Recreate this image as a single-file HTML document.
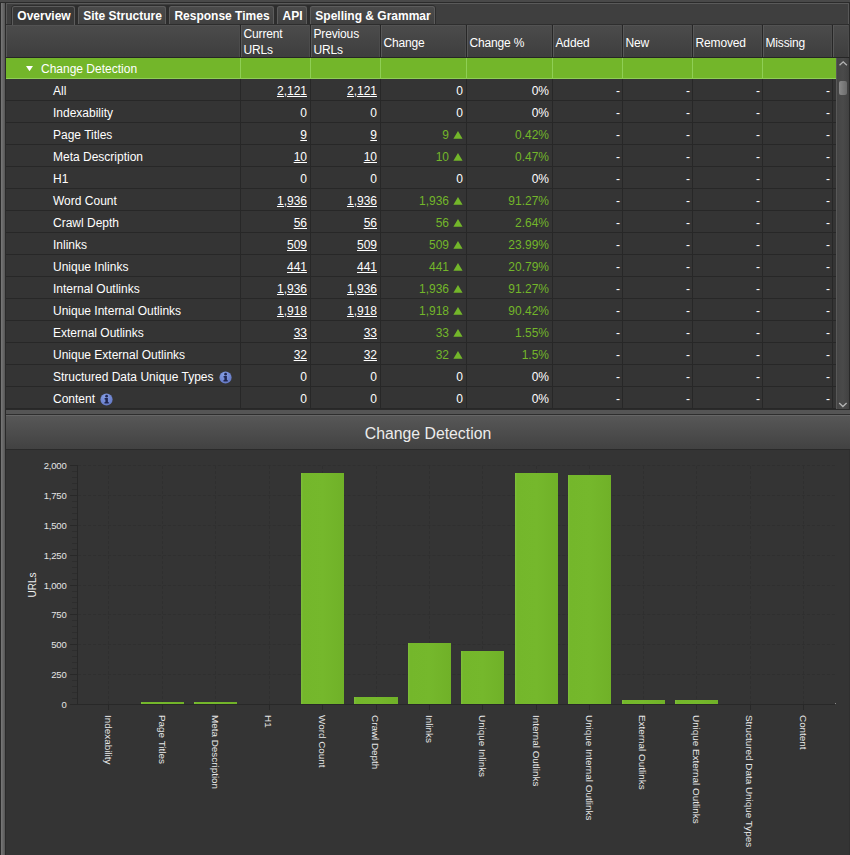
<!DOCTYPE html><html><head><meta charset="utf-8"><title>Change Detection</title><style>
html,body{margin:0;padding:0}
body{width:850px;height:855px;overflow:hidden;background:#343434;position:relative;font-family:"Liberation Sans",Arial,sans-serif;font-size:12px;color:#fff}
div,span{position:absolute;box-sizing:border-box;white-space:nowrap}
.tab{top:6px;height:18px;border:1px solid #5c5c5c;border-bottom:none;border-radius:2.5px 2.5px 0 0;background:linear-gradient(#4b4b4b,#404040);font-weight:bold;font-size:12px;line-height:18px;text-align:center;color:#fff;padding-left:1px}
.tab.sel{background:#383838;border-color:#5c5c5c;height:19px}
.hc{top:25px;height:32px;background:linear-gradient(#5a5a5a 0,#4b4b4b 1px,#3e3e3e);border-left:1px solid #585858;border-right:1px solid #4c4c4c;font-size:12px;letter-spacing:-0.15px;line-height:16.2px;padding-left:1.5px;padding-top:1px;color:#fff}
.vl{width:1px;background:#272727}
.hl{height:1px;background:#272727;left:6px;width:830px}
.lab{left:53px;height:21px;line-height:25px}
.num{height:21px;line-height:25px;text-align:right}
.num u{text-decoration:underline;text-underline-offset:1px}
.g{color:#73b62a}
.tri{width:9.2px;height:7.8px;background:#73b62a;clip-path:polygon(50% 0,100% 100%,0 100%)}
.info{width:12px;height:12px;border-radius:6px;background:#6f80c4}
.yl{font-size:9.5px;letter-spacing:-0.2px;text-align:right;width:60px;left:6.5px;height:14px;line-height:14px;color:#e4e4e4}
.xl{font-size:9.9px;transform-origin:0 0;transform:rotate(90deg);height:14px;line-height:14px;color:#e8e8e8}
.bar{background:linear-gradient(90deg,#7fbf3c 0,#74b72b 5%,#75b82c 50%,#70b128 100%)}
</style></head><body>
<div style="left:0;top:0;width:850px;height:2px;background:#494949"></div>
<div style="left:0;top:2px;width:850px;height:1px;background:#2b2b2b"></div>
<div style="left:0;top:3px;width:850px;height:22px;background:#3f3f3f"></div>
<div style="left:0;top:3px;width:6px;height:852px;background:linear-gradient(90deg,#2a2a2a 0,#2a2a2a 1px,#787878 1px,#565656 5px,#2a2a2a 5px)"></div>
<div style="left:6px;top:3px;width:843px;height:1px;background:#5a5a5a"></div>
<div style="left:6px;top:3px;width:1px;height:21px;background:#585858"></div>
<div style="left:848px;top:3px;width:1px;height:21px;background:#585858"></div>
<div style="left:849px;top:3px;width:1px;height:447px;background:#2a2a2a"></div>
<div style="left:849px;top:450px;width:1px;height:405px;background:#2f2f2f"></div>
<div style="left:6px;top:24px;width:844px;height:1px;background:#2e2e2e"></div>
<div style="left:11px;top:5px;width:425px;height:20px;background:#2d2d2d;border-radius:4px 4px 0 0"></div>
<div class="tab sel" style="left:12px;width:63px">Overview</div>
<div class="tab" style="left:78px;width:88px">Site Structure</div>
<div class="tab" style="left:169px;width:105px">Response Times</div>
<div class="tab" style="left:277px;width:30px">API</div>
<div class="tab" style="left:310px;width:125px">Spelling &amp; Grammar</div>
<div class="hc" style="left:6px;width:234px"></div>
<div class="hc" style="left:241px;width:69px;">Current<br>URLs</div>
<div class="hc" style="left:311px;width:69px;">Previous<br>URLs</div>
<div class="hc" style="left:381px;width:85px;line-height:34px;">Change</div>
<div class="hc" style="left:467px;width:85px;line-height:34px;">Change %</div>
<div class="hc" style="left:553px;width:69px;line-height:34px;">Added</div>
<div class="hc" style="left:623px;width:69px;line-height:34px;">New</div>
<div class="hc" style="left:693px;width:69px;line-height:34px;">Removed</div>
<div class="hc" style="left:763px;width:69px;line-height:34px;">Missing</div>
<div class="hc" style="left:833px;width:16px"></div>
<div class="vl" style="left:240px;top:25px;height:33px"></div>
<div class="vl" style="left:310px;top:25px;height:33px"></div>
<div class="vl" style="left:380px;top:25px;height:33px"></div>
<div class="vl" style="left:466px;top:25px;height:33px"></div>
<div class="vl" style="left:552px;top:25px;height:33px"></div>
<div class="vl" style="left:622px;top:25px;height:33px"></div>
<div class="vl" style="left:692px;top:25px;height:33px"></div>
<div class="vl" style="left:762px;top:25px;height:33px"></div>
<div class="vl" style="left:832px;top:25px;height:33px"></div>
<div style="left:849px;top:25px;width:1px;height:384px;background:#2a2a2a"></div>
<div style="left:6px;top:57px;width:844px;height:1px;background:#262626"></div>
<div style="left:6px;top:58px;width:830px;height:21px;background:#73b62a;border-bottom:1px solid #8fcf55"></div>
<div style="left:240px;top:58px;width:1px;height:21px;background:#8fcf55"></div>
<div style="left:310px;top:58px;width:1px;height:21px;background:#8fcf55"></div>
<div style="left:380px;top:58px;width:1px;height:21px;background:#8fcf55"></div>
<div style="left:466px;top:58px;width:1px;height:21px;background:#8fcf55"></div>
<div style="left:552px;top:58px;width:1px;height:21px;background:#8fcf55"></div>
<div style="left:622px;top:58px;width:1px;height:21px;background:#8fcf55"></div>
<div style="left:692px;top:58px;width:1px;height:21px;background:#8fcf55"></div>
<div style="left:762px;top:58px;width:1px;height:21px;background:#8fcf55"></div>
<div style="left:25.7px;top:65.6px;width:7.6px;height:5.6px;background:#fff;clip-path:polygon(0 0,100% 0,50% 100%)"></div>
<div style="left:41px;top:58px;height:21px;line-height:22px;color:#fff">Change Detection</div>
<div class="lab" style="top:79px">All</div>
<div class="num" style="left:241px;top:79px;width:69px;padding-right:3px"><u>2,121</u></div>
<div class="num" style="left:311px;top:79px;width:69px;padding-right:3px"><u>2,121</u></div>
<div class="num" style="left:381px;top:79px;width:85px;padding-right:3px">0</div>
<div class="num" style="left:467px;top:79px;width:85px;padding-right:3px">0%</div>
<div class="num" style="left:553px;top:79px;width:69px;padding-right:2px">-</div>
<div class="num" style="left:623px;top:79px;width:69px;padding-right:2px">-</div>
<div class="num" style="left:693px;top:79px;width:69px;padding-right:2px">-</div>
<div class="num" style="left:763px;top:79px;width:69px;padding-right:2px">-</div>
<div class="hl" style="top:100px"></div>
<div class="lab" style="top:101px">Indexability</div>
<div class="num" style="left:241px;top:101px;width:69px;padding-right:3px">0</div>
<div class="num" style="left:311px;top:101px;width:69px;padding-right:3px">0</div>
<div class="num" style="left:381px;top:101px;width:85px;padding-right:3px">0</div>
<div class="num" style="left:467px;top:101px;width:85px;padding-right:3px">0%</div>
<div class="num" style="left:553px;top:101px;width:69px;padding-right:2px">-</div>
<div class="num" style="left:623px;top:101px;width:69px;padding-right:2px">-</div>
<div class="num" style="left:693px;top:101px;width:69px;padding-right:2px">-</div>
<div class="num" style="left:763px;top:101px;width:69px;padding-right:2px">-</div>
<div class="hl" style="top:122px"></div>
<div class="lab" style="top:123px">Page Titles</div>
<div class="num" style="left:241px;top:123px;width:69px;padding-right:3px"><u>9</u></div>
<div class="num" style="left:311px;top:123px;width:69px;padding-right:3px"><u>9</u></div>
<div class="num g" style="left:381px;top:123px;width:85px;padding-right:17px">9</div>
<div class="num g" style="left:467px;top:123px;width:85px;padding-right:3px">0.42%</div>
<div class="num" style="left:553px;top:123px;width:69px;padding-right:2px">-</div>
<div class="num" style="left:623px;top:123px;width:69px;padding-right:2px">-</div>
<div class="num" style="left:693px;top:123px;width:69px;padding-right:2px">-</div>
<div class="num" style="left:763px;top:123px;width:69px;padding-right:2px">-</div>
<div class="tri" style="left:453.4px;top:131px"></div>
<div class="hl" style="top:144px"></div>
<div class="lab" style="top:145px">Meta Description</div>
<div class="num" style="left:241px;top:145px;width:69px;padding-right:3px"><u>10</u></div>
<div class="num" style="left:311px;top:145px;width:69px;padding-right:3px"><u>10</u></div>
<div class="num g" style="left:381px;top:145px;width:85px;padding-right:17px">10</div>
<div class="num g" style="left:467px;top:145px;width:85px;padding-right:3px">0.47%</div>
<div class="num" style="left:553px;top:145px;width:69px;padding-right:2px">-</div>
<div class="num" style="left:623px;top:145px;width:69px;padding-right:2px">-</div>
<div class="num" style="left:693px;top:145px;width:69px;padding-right:2px">-</div>
<div class="num" style="left:763px;top:145px;width:69px;padding-right:2px">-</div>
<div class="tri" style="left:453.4px;top:153px"></div>
<div class="hl" style="top:166px"></div>
<div class="lab" style="top:167px">H1</div>
<div class="num" style="left:241px;top:167px;width:69px;padding-right:3px">0</div>
<div class="num" style="left:311px;top:167px;width:69px;padding-right:3px">0</div>
<div class="num" style="left:381px;top:167px;width:85px;padding-right:3px">0</div>
<div class="num" style="left:467px;top:167px;width:85px;padding-right:3px">0%</div>
<div class="num" style="left:553px;top:167px;width:69px;padding-right:2px">-</div>
<div class="num" style="left:623px;top:167px;width:69px;padding-right:2px">-</div>
<div class="num" style="left:693px;top:167px;width:69px;padding-right:2px">-</div>
<div class="num" style="left:763px;top:167px;width:69px;padding-right:2px">-</div>
<div class="hl" style="top:188px"></div>
<div class="lab" style="top:189px">Word Count</div>
<div class="num" style="left:241px;top:189px;width:69px;padding-right:3px"><u>1,936</u></div>
<div class="num" style="left:311px;top:189px;width:69px;padding-right:3px"><u>1,936</u></div>
<div class="num g" style="left:381px;top:189px;width:85px;padding-right:17px">1,936</div>
<div class="num g" style="left:467px;top:189px;width:85px;padding-right:3px">91.27%</div>
<div class="num" style="left:553px;top:189px;width:69px;padding-right:2px">-</div>
<div class="num" style="left:623px;top:189px;width:69px;padding-right:2px">-</div>
<div class="num" style="left:693px;top:189px;width:69px;padding-right:2px">-</div>
<div class="num" style="left:763px;top:189px;width:69px;padding-right:2px">-</div>
<div class="tri" style="left:453.4px;top:197px"></div>
<div class="hl" style="top:210px"></div>
<div class="lab" style="top:211px">Crawl Depth</div>
<div class="num" style="left:241px;top:211px;width:69px;padding-right:3px"><u>56</u></div>
<div class="num" style="left:311px;top:211px;width:69px;padding-right:3px"><u>56</u></div>
<div class="num g" style="left:381px;top:211px;width:85px;padding-right:17px">56</div>
<div class="num g" style="left:467px;top:211px;width:85px;padding-right:3px">2.64%</div>
<div class="num" style="left:553px;top:211px;width:69px;padding-right:2px">-</div>
<div class="num" style="left:623px;top:211px;width:69px;padding-right:2px">-</div>
<div class="num" style="left:693px;top:211px;width:69px;padding-right:2px">-</div>
<div class="num" style="left:763px;top:211px;width:69px;padding-right:2px">-</div>
<div class="tri" style="left:453.4px;top:219px"></div>
<div class="hl" style="top:232px"></div>
<div class="lab" style="top:233px">Inlinks</div>
<div class="num" style="left:241px;top:233px;width:69px;padding-right:3px"><u>509</u></div>
<div class="num" style="left:311px;top:233px;width:69px;padding-right:3px"><u>509</u></div>
<div class="num g" style="left:381px;top:233px;width:85px;padding-right:17px">509</div>
<div class="num g" style="left:467px;top:233px;width:85px;padding-right:3px">23.99%</div>
<div class="num" style="left:553px;top:233px;width:69px;padding-right:2px">-</div>
<div class="num" style="left:623px;top:233px;width:69px;padding-right:2px">-</div>
<div class="num" style="left:693px;top:233px;width:69px;padding-right:2px">-</div>
<div class="num" style="left:763px;top:233px;width:69px;padding-right:2px">-</div>
<div class="tri" style="left:453.4px;top:241px"></div>
<div class="hl" style="top:254px"></div>
<div class="lab" style="top:255px">Unique Inlinks</div>
<div class="num" style="left:241px;top:255px;width:69px;padding-right:3px"><u>441</u></div>
<div class="num" style="left:311px;top:255px;width:69px;padding-right:3px"><u>441</u></div>
<div class="num g" style="left:381px;top:255px;width:85px;padding-right:17px">441</div>
<div class="num g" style="left:467px;top:255px;width:85px;padding-right:3px">20.79%</div>
<div class="num" style="left:553px;top:255px;width:69px;padding-right:2px">-</div>
<div class="num" style="left:623px;top:255px;width:69px;padding-right:2px">-</div>
<div class="num" style="left:693px;top:255px;width:69px;padding-right:2px">-</div>
<div class="num" style="left:763px;top:255px;width:69px;padding-right:2px">-</div>
<div class="tri" style="left:453.4px;top:263px"></div>
<div class="hl" style="top:276px"></div>
<div class="lab" style="top:277px">Internal Outlinks</div>
<div class="num" style="left:241px;top:277px;width:69px;padding-right:3px"><u>1,936</u></div>
<div class="num" style="left:311px;top:277px;width:69px;padding-right:3px"><u>1,936</u></div>
<div class="num g" style="left:381px;top:277px;width:85px;padding-right:17px">1,936</div>
<div class="num g" style="left:467px;top:277px;width:85px;padding-right:3px">91.27%</div>
<div class="num" style="left:553px;top:277px;width:69px;padding-right:2px">-</div>
<div class="num" style="left:623px;top:277px;width:69px;padding-right:2px">-</div>
<div class="num" style="left:693px;top:277px;width:69px;padding-right:2px">-</div>
<div class="num" style="left:763px;top:277px;width:69px;padding-right:2px">-</div>
<div class="tri" style="left:453.4px;top:285px"></div>
<div class="hl" style="top:298px"></div>
<div class="lab" style="top:299px">Unique Internal Outlinks</div>
<div class="num" style="left:241px;top:299px;width:69px;padding-right:3px"><u>1,918</u></div>
<div class="num" style="left:311px;top:299px;width:69px;padding-right:3px"><u>1,918</u></div>
<div class="num g" style="left:381px;top:299px;width:85px;padding-right:17px">1,918</div>
<div class="num g" style="left:467px;top:299px;width:85px;padding-right:3px">90.42%</div>
<div class="num" style="left:553px;top:299px;width:69px;padding-right:2px">-</div>
<div class="num" style="left:623px;top:299px;width:69px;padding-right:2px">-</div>
<div class="num" style="left:693px;top:299px;width:69px;padding-right:2px">-</div>
<div class="num" style="left:763px;top:299px;width:69px;padding-right:2px">-</div>
<div class="tri" style="left:453.4px;top:307px"></div>
<div class="hl" style="top:320px"></div>
<div class="lab" style="top:321px">External Outlinks</div>
<div class="num" style="left:241px;top:321px;width:69px;padding-right:3px"><u>33</u></div>
<div class="num" style="left:311px;top:321px;width:69px;padding-right:3px"><u>33</u></div>
<div class="num g" style="left:381px;top:321px;width:85px;padding-right:17px">33</div>
<div class="num g" style="left:467px;top:321px;width:85px;padding-right:3px">1.55%</div>
<div class="num" style="left:553px;top:321px;width:69px;padding-right:2px">-</div>
<div class="num" style="left:623px;top:321px;width:69px;padding-right:2px">-</div>
<div class="num" style="left:693px;top:321px;width:69px;padding-right:2px">-</div>
<div class="num" style="left:763px;top:321px;width:69px;padding-right:2px">-</div>
<div class="tri" style="left:453.4px;top:329px"></div>
<div class="hl" style="top:342px"></div>
<div class="lab" style="top:343px">Unique External Outlinks</div>
<div class="num" style="left:241px;top:343px;width:69px;padding-right:3px"><u>32</u></div>
<div class="num" style="left:311px;top:343px;width:69px;padding-right:3px"><u>32</u></div>
<div class="num g" style="left:381px;top:343px;width:85px;padding-right:17px">32</div>
<div class="num g" style="left:467px;top:343px;width:85px;padding-right:3px">1.5%</div>
<div class="num" style="left:553px;top:343px;width:69px;padding-right:2px">-</div>
<div class="num" style="left:623px;top:343px;width:69px;padding-right:2px">-</div>
<div class="num" style="left:693px;top:343px;width:69px;padding-right:2px">-</div>
<div class="num" style="left:763px;top:343px;width:69px;padding-right:2px">-</div>
<div class="tri" style="left:453.4px;top:351px"></div>
<div class="hl" style="top:364px"></div>
<div class="lab" style="top:365px">Structured Data Unique Types</div>
<div class="num" style="left:241px;top:365px;width:69px;padding-right:3px">0</div>
<div class="num" style="left:311px;top:365px;width:69px;padding-right:3px">0</div>
<div class="num" style="left:381px;top:365px;width:85px;padding-right:3px">0</div>
<div class="num" style="left:467px;top:365px;width:85px;padding-right:3px">0%</div>
<div class="num" style="left:553px;top:365px;width:69px;padding-right:2px">-</div>
<div class="num" style="left:623px;top:365px;width:69px;padding-right:2px">-</div>
<div class="num" style="left:693px;top:365px;width:69px;padding-right:2px">-</div>
<div class="num" style="left:763px;top:365px;width:69px;padding-right:2px">-</div>
<div class="hl" style="top:386px"></div>
<div class="lab" style="top:387px">Content</div>
<div class="num" style="left:241px;top:387px;width:69px;padding-right:3px">0</div>
<div class="num" style="left:311px;top:387px;width:69px;padding-right:3px">0</div>
<div class="num" style="left:381px;top:387px;width:85px;padding-right:3px">0</div>
<div class="num" style="left:467px;top:387px;width:85px;padding-right:3px">0%</div>
<div class="num" style="left:553px;top:387px;width:69px;padding-right:2px">-</div>
<div class="num" style="left:623px;top:387px;width:69px;padding-right:2px">-</div>
<div class="num" style="left:693px;top:387px;width:69px;padding-right:2px">-</div>
<div class="num" style="left:763px;top:387px;width:69px;padding-right:2px">-</div>
<div class="hl" style="top:408px"></div>
<div class="vl" style="left:240px;top:79px;height:330px"></div>
<div class="vl" style="left:310px;top:79px;height:330px"></div>
<div class="vl" style="left:380px;top:79px;height:330px"></div>
<div class="vl" style="left:466px;top:79px;height:330px"></div>
<div class="vl" style="left:552px;top:79px;height:330px"></div>
<div class="vl" style="left:622px;top:79px;height:330px"></div>
<div class="vl" style="left:692px;top:79px;height:330px"></div>
<div class="vl" style="left:762px;top:79px;height:330px"></div>
<div class="vl" style="left:832px;top:79px;height:330px"></div>
<svg style="position:absolute;left:218.5px;top:370.5px" width="13" height="13" viewBox="0 0 13 13"><defs><radialGradient id="ig1" cx="0.4" cy="0.3" r="0.8"><stop offset="0" stop-color="#86a0e6"/><stop offset="1" stop-color="#6073c0"/></radialGradient></defs><circle cx="6.5" cy="6.5" r="6.1" fill="url(#ig1)"/><circle cx="6.6" cy="3.2" r="1.35" fill="#20264f"/><path d="M4.6 5.1 H7.9 V9.0 H8.7 V10.4 H4.5 V9.0 H5.4 V6.4 H4.6 Z" fill="#20264f"/></svg>
<svg style="position:absolute;left:99.5px;top:392.6px" width="13" height="13" viewBox="0 0 13 13"><defs><radialGradient id="ig2" cx="0.4" cy="0.3" r="0.8"><stop offset="0" stop-color="#86a0e6"/><stop offset="1" stop-color="#6073c0"/></radialGradient></defs><circle cx="6.5" cy="6.5" r="6.1" fill="url(#ig2)"/><circle cx="6.6" cy="3.2" r="1.35" fill="#20264f"/><path d="M4.6 5.1 H7.9 V9.0 H8.7 V10.4 H4.5 V9.0 H5.4 V6.4 H4.6 Z" fill="#20264f"/></svg>
<div style="left:836px;top:58px;width:13px;height:351px;background:linear-gradient(90deg,#585858 0,#585858 1px,#454545 1px,#4a4a4a 7px,#414141 13px)"></div>
<div style="left:839px;top:81px;width:8px;height:14px;border-radius:2px;background:linear-gradient(90deg,#8a8a8a,#6c6c6c)"></div>
<svg style="position:absolute;left:837px;top:58px" width="12" height="10"><path d="M2.5 7.3 L6.2 3.8 L9.9 7.3" stroke="#b4b4b4" stroke-width="1.3" fill="none"/></svg>
<svg style="position:absolute;left:837px;top:400px" width="12" height="10"><path d="M2.2 3 L5.9 6.5 L9.6 3" stroke="#b4b4b4" stroke-width="1.3" fill="none"/></svg>
<div style="left:6px;top:409px;width:844px;height:1px;background:#2a2a2a"></div>
<div style="left:6px;top:410px;width:844px;height:4px;background:#555"></div>
<div style="left:6px;top:414px;width:844px;height:1px;background:#2e2e2e"></div>
<div style="left:6px;top:415px;width:844px;height:34px;background:linear-gradient(#575757,#424242);border-top:1px solid #666;text-align:center;font-size:15.8px;line-height:35px;color:#ececec">Change Detection</div>
<div style="left:6px;top:449px;width:844px;height:1px;background:#2a2a2a"></div>
<div style="left:70px;top:704.0px;width:7px;height:1px;background:#282828"></div>
<div class="yl" style="top:698.0px">0</div>
<div style="left:70px;top:674.1px;width:7px;height:1px;background:#282828"></div>
<div style="left:78px;top:674.1px;width:757px;height:0;border-top:1px dashed rgba(0,0,0,0.09)"></div>
<div class="yl" style="top:668.1px">250</div>
<div style="left:70px;top:644.2px;width:7px;height:1px;background:#282828"></div>
<div style="left:78px;top:644.2px;width:757px;height:0;border-top:1px dashed rgba(0,0,0,0.09)"></div>
<div class="yl" style="top:638.2px">500</div>
<div style="left:70px;top:614.4px;width:7px;height:1px;background:#282828"></div>
<div style="left:78px;top:614.4px;width:757px;height:0;border-top:1px dashed rgba(0,0,0,0.09)"></div>
<div class="yl" style="top:608.4px">750</div>
<div style="left:70px;top:584.5px;width:7px;height:1px;background:#282828"></div>
<div style="left:78px;top:584.5px;width:757px;height:0;border-top:1px dashed rgba(0,0,0,0.09)"></div>
<div class="yl" style="top:578.5px">1,000</div>
<div style="left:70px;top:554.6px;width:7px;height:1px;background:#282828"></div>
<div style="left:78px;top:554.6px;width:757px;height:0;border-top:1px dashed rgba(0,0,0,0.09)"></div>
<div class="yl" style="top:548.6px">1,250</div>
<div style="left:70px;top:524.8px;width:7px;height:1px;background:#282828"></div>
<div style="left:78px;top:524.8px;width:757px;height:0;border-top:1px dashed rgba(0,0,0,0.09)"></div>
<div class="yl" style="top:518.8px">1,500</div>
<div style="left:70px;top:494.9px;width:7px;height:1px;background:#282828"></div>
<div style="left:78px;top:494.9px;width:757px;height:0;border-top:1px dashed rgba(0,0,0,0.09)"></div>
<div class="yl" style="top:488.9px">1,750</div>
<div style="left:70px;top:465.0px;width:7px;height:1px;background:#282828"></div>
<div style="left:78px;top:465.0px;width:757px;height:0;border-top:1px dashed rgba(0,0,0,0.09)"></div>
<div class="yl" style="top:459.0px">2,000</div>
<div style="left:72px;top:698.0px;width:5px;height:1px;background:#2d2d2d"></div>
<div style="left:72px;top:692.0px;width:5px;height:1px;background:#2d2d2d"></div>
<div style="left:72px;top:686.1px;width:5px;height:1px;background:#2d2d2d"></div>
<div style="left:72px;top:680.1px;width:5px;height:1px;background:#2d2d2d"></div>
<div style="left:72px;top:668.1px;width:5px;height:1px;background:#2d2d2d"></div>
<div style="left:72px;top:662.2px;width:5px;height:1px;background:#2d2d2d"></div>
<div style="left:72px;top:656.2px;width:5px;height:1px;background:#2d2d2d"></div>
<div style="left:72px;top:650.2px;width:5px;height:1px;background:#2d2d2d"></div>
<div style="left:72px;top:638.3px;width:5px;height:1px;background:#2d2d2d"></div>
<div style="left:72px;top:632.3px;width:5px;height:1px;background:#2d2d2d"></div>
<div style="left:72px;top:626.3px;width:5px;height:1px;background:#2d2d2d"></div>
<div style="left:72px;top:620.4px;width:5px;height:1px;background:#2d2d2d"></div>
<div style="left:72px;top:608.4px;width:5px;height:1px;background:#2d2d2d"></div>
<div style="left:72px;top:602.4px;width:5px;height:1px;background:#2d2d2d"></div>
<div style="left:72px;top:596.5px;width:5px;height:1px;background:#2d2d2d"></div>
<div style="left:72px;top:590.5px;width:5px;height:1px;background:#2d2d2d"></div>
<div style="left:72px;top:578.5px;width:5px;height:1px;background:#2d2d2d"></div>
<div style="left:72px;top:572.5px;width:5px;height:1px;background:#2d2d2d"></div>
<div style="left:72px;top:566.6px;width:5px;height:1px;background:#2d2d2d"></div>
<div style="left:72px;top:560.6px;width:5px;height:1px;background:#2d2d2d"></div>
<div style="left:72px;top:548.6px;width:5px;height:1px;background:#2d2d2d"></div>
<div style="left:72px;top:542.7px;width:5px;height:1px;background:#2d2d2d"></div>
<div style="left:72px;top:536.7px;width:5px;height:1px;background:#2d2d2d"></div>
<div style="left:72px;top:530.7px;width:5px;height:1px;background:#2d2d2d"></div>
<div style="left:72px;top:518.8px;width:5px;height:1px;background:#2d2d2d"></div>
<div style="left:72px;top:512.8px;width:5px;height:1px;background:#2d2d2d"></div>
<div style="left:72px;top:506.8px;width:5px;height:1px;background:#2d2d2d"></div>
<div style="left:72px;top:500.9px;width:5px;height:1px;background:#2d2d2d"></div>
<div style="left:72px;top:488.9px;width:5px;height:1px;background:#2d2d2d"></div>
<div style="left:72px;top:482.9px;width:5px;height:1px;background:#2d2d2d"></div>
<div style="left:72px;top:477.0px;width:5px;height:1px;background:#2d2d2d"></div>
<div style="left:72px;top:471.0px;width:5px;height:1px;background:#2d2d2d"></div>
<div style="left:77px;top:465px;width:1px;height:240px;background:#282828"></div>
<div style="left:77px;top:704px;width:758px;height:1px;background:#282828"></div>
<div style="left:835px;top:703px;width:1px;height:1px;background:#8a8a8a"></div>
<div style="left:30.5px;top:585px;width:0;height:0"><div style="left:0;top:0;transform:translate(-50%,-50%) rotate(-90deg) scaleX(0.86);font-size:11.7px;color:#eee">URLs</div></div>
<div style="left:108.4px;top:466px;width:0;height:238px;border-left:1px dashed rgba(0,0,0,0.09)"></div>
<div style="left:108.4px;top:705px;width:1px;height:5px;background:#282828"></div>
<div class="xl" style="left:115.1px;top:715px">Indexability</div>
<div style="left:161.8px;top:466px;width:0;height:238px;border-left:1px dashed rgba(0,0,0,0.09)"></div>
<div style="left:161.8px;top:705px;width:1px;height:5px;background:#282828"></div>
<div class="bar" style="left:140.7px;top:702.0px;width:43.2px;height:2.0px"></div>
<div class="xl" style="left:168.5px;top:715px">Page Titles</div>
<div style="left:215.3px;top:466px;width:0;height:238px;border-left:1px dashed rgba(0,0,0,0.09)"></div>
<div style="left:215.3px;top:705px;width:1px;height:5px;background:#282828"></div>
<div class="bar" style="left:194.2px;top:702.0px;width:43.2px;height:2.0px"></div>
<div class="xl" style="left:222.0px;top:715px">Meta Description</div>
<div style="left:268.7px;top:466px;width:0;height:238px;border-left:1px dashed rgba(0,0,0,0.09)"></div>
<div style="left:268.7px;top:705px;width:1px;height:5px;background:#282828"></div>
<div class="xl" style="left:275.4px;top:715px">H1</div>
<div style="left:322.1px;top:466px;width:0;height:238px;border-left:1px dashed rgba(0,0,0,0.09)"></div>
<div style="left:322.1px;top:705px;width:1px;height:5px;background:#282828"></div>
<div class="bar" style="left:301.0px;top:472.6px;width:43.2px;height:231.4px"></div>
<div class="xl" style="left:328.8px;top:715px">Word Count</div>
<div style="left:375.5px;top:466px;width:0;height:238px;border-left:1px dashed rgba(0,0,0,0.09)"></div>
<div style="left:375.5px;top:705px;width:1px;height:5px;background:#282828"></div>
<div class="bar" style="left:354.4px;top:697.3px;width:43.2px;height:6.7px"></div>
<div class="xl" style="left:382.2px;top:715px">Crawl Depth</div>
<div style="left:429.0px;top:466px;width:0;height:238px;border-left:1px dashed rgba(0,0,0,0.09)"></div>
<div style="left:429.0px;top:705px;width:1px;height:5px;background:#282828"></div>
<div class="bar" style="left:407.9px;top:643.2px;width:43.2px;height:60.8px"></div>
<div class="xl" style="left:435.7px;top:715px">Inlinks</div>
<div style="left:482.4px;top:466px;width:0;height:238px;border-left:1px dashed rgba(0,0,0,0.09)"></div>
<div style="left:482.4px;top:705px;width:1px;height:5px;background:#282828"></div>
<div class="bar" style="left:461.3px;top:651.3px;width:43.2px;height:52.7px"></div>
<div class="xl" style="left:489.1px;top:715px">Unique Inlinks</div>
<div style="left:535.8px;top:466px;width:0;height:238px;border-left:1px dashed rgba(0,0,0,0.09)"></div>
<div style="left:535.8px;top:705px;width:1px;height:5px;background:#282828"></div>
<div class="bar" style="left:514.7px;top:472.6px;width:43.2px;height:231.4px"></div>
<div class="xl" style="left:542.5px;top:715px">Internal Outlinks</div>
<div style="left:589.3px;top:466px;width:0;height:238px;border-left:1px dashed rgba(0,0,0,0.09)"></div>
<div style="left:589.3px;top:705px;width:1px;height:5px;background:#282828"></div>
<div class="bar" style="left:568.2px;top:474.8px;width:43.2px;height:229.2px"></div>
<div class="xl" style="left:596.0px;top:715px">Unique Internal Outlinks</div>
<div style="left:642.7px;top:466px;width:0;height:238px;border-left:1px dashed rgba(0,0,0,0.09)"></div>
<div style="left:642.7px;top:705px;width:1px;height:5px;background:#282828"></div>
<div class="bar" style="left:621.6px;top:700.1px;width:43.2px;height:3.9px"></div>
<div class="xl" style="left:649.4px;top:715px">External Outlinks</div>
<div style="left:696.1px;top:466px;width:0;height:238px;border-left:1px dashed rgba(0,0,0,0.09)"></div>
<div style="left:696.1px;top:705px;width:1px;height:5px;background:#282828"></div>
<div class="bar" style="left:675.0px;top:700.2px;width:43.2px;height:3.8px"></div>
<div class="xl" style="left:702.8px;top:715px">Unique External Outlinks</div>
<div style="left:749.6px;top:466px;width:0;height:238px;border-left:1px dashed rgba(0,0,0,0.09)"></div>
<div style="left:749.6px;top:705px;width:1px;height:5px;background:#282828"></div>
<div class="xl" style="left:756.3px;top:715px">Structured Data Unique Types</div>
<div style="left:803.0px;top:466px;width:0;height:238px;border-left:1px dashed rgba(0,0,0,0.09)"></div>
<div style="left:803.0px;top:705px;width:1px;height:5px;background:#282828"></div>
<div class="xl" style="left:809.7px;top:715px">Content</div>
</body></html>
